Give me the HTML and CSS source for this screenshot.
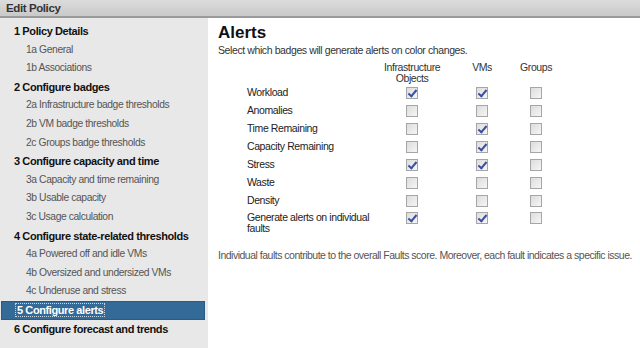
FILE: index.html
```html
<!DOCTYPE html>
<html>
  <head>
    <title>Edit Policy</title>
    <link rel="stylesheet" href="styles.css">
  </head>
  <body>
    <div class="window">
      <div class="titlebar">Edit Policy</div>
      <div class="main">
        <ul class="steps">
          <li class="step">1 Policy Details</li>
          <li class="sub">1a General</li>
          <li class="sub">1b Associations</li>
          <li class="step">2 Configure badges</li>
          <li class="sub">2a Infrastructure badge thresholds</li>
          <li class="sub">2b VM badge thresholds</li>
          <li class="sub">2c Groups badge thresholds</li>
          <li class="step">3 Configure capacity and time</li>
          <li class="sub">3a Capacity and time remaining</li>
          <li class="sub">3b Usable capacity</li>
          <li class="sub">3c Usage calculation</li>
          <li class="step">4 Configure state-related thresholds</li>
          <li class="sub">4a Powered off and idle VMs</li>
          <li class="sub">4b Oversized and undersized VMs</li>
          <li class="sub">4c Underuse and stress</li>
          <li class="step active"><span class="focus">5 Configure alerts</span></li>
          <li class="step">6 Configure forecast and trends</li>
        </ul>
        <div class="content">
          <h1>Alerts</h1>
          <p class="intro">Select which badges will generate alerts on color changes.</p>
          <table class="grid">
            <thead>
              <tr>
                <th class="label"></th>
                <th class="col-infra">Infrastructure<br>Objects</th>
                <th class="col-vm">VMs</th>
                <th class="col-grp">Groups</th>
              </tr>
            </thead>
            <tbody>
              <tr><td class="label">Workload</td><td><span class="cb on"></span></td><td><span class="cb on"></span></td><td><span class="cb"></span></td></tr>
              <tr><td class="label">Anomalies</td><td><span class="cb"></span></td><td><span class="cb"></span></td><td><span class="cb"></span></td></tr>
              <tr><td class="label">Time Remaining</td><td><span class="cb"></span></td><td><span class="cb on"></span></td><td><span class="cb"></span></td></tr>
              <tr><td class="label">Capacity Remaining</td><td><span class="cb"></span></td><td><span class="cb on"></span></td><td><span class="cb"></span></td></tr>
              <tr><td class="label">Stress</td><td><span class="cb on"></span></td><td><span class="cb on"></span></td><td><span class="cb"></span></td></tr>
              <tr><td class="label">Waste</td><td><span class="cb"></span></td><td><span class="cb"></span></td><td><span class="cb"></span></td></tr>
              <tr><td class="label">Density</td><td><span class="cb"></span></td><td><span class="cb"></span></td><td><span class="cb"></span></td></tr>
              <tr class="tall"><td class="label">Generate alerts on individual<br>faults</td><td><span class="cb on"></span></td><td><span class="cb on"></span></td><td><span class="cb"></span></td></tr>
            </tbody>
          </table>
          <p class="note">Individual faults contribute to the overall Faults score. Moreover, each fault indicates a specific issue.</p>
        </div>
      </div>
    </div>
  </body>
</html>
```

FILE: styles.css
```css
* {
  margin: 0;
  padding: 0;
  box-sizing: border-box;
}

body {
  font-family: "Liberation Sans", Arial, sans-serif;
  font-size: 10.5px;
  letter-spacing: -0.4px;
  color: #222;
  background: #fff;
}

.window {
  display: flex;
  flex-direction: column;
  width: 640px;
  height: 348px;
  overflow: hidden;
}

.titlebar {
  height: 18px;
  padding: 2px 6px 0;
  font-weight: bold;
  font-size: 11.5px;
  color: #333;
  background: linear-gradient(#dcdcdc, #c9c9c9);
  border-bottom: 2px solid #9a9a9a;
}

.main {
  display: flex;
  flex: 1;
}

.steps {
  list-style: none;
  flex: 0 0 208px;
  padding: 4px 3px 0 1px;
  background: #e8e8e8;
}

.steps li {
  height: 18.6px;
  line-height: 18px;
  white-space: nowrap;
}

.step {
  padding-left: 13px;
  font-weight: bold;
  font-size: 11px;
  color: #111;
}

.sub {
  padding-left: 25px;
  font-size: 10.3px;
  color: #555;
}

.step.active {
  padding-left: 13px;
  background: #336a97;
  border: 1px solid #2a5a85;
  color: #fff;
  line-height: 16px;
}

.focus {
  border: 1px dotted #c8d6e4;
  padding: 0 1px;
  color: #fff;
}

.content {
  flex: 1;
  min-width: 0;
  overflow: hidden;
  padding: 5px 0 0 10px;
}

h1 {
  font-size: 17px;
  font-weight: bold;
  letter-spacing: 0;
  color: #111;
  line-height: 20px;
}

.intro {
  color: #333;
  margin-top: 1px;
}

.grid {
  border-collapse: collapse;
  margin-top: 6px;
  margin-left: 29px;
}

.grid th {
  font-weight: normal;
  color: #333;
  line-height: 10.5px;
  vertical-align: top;
}

.grid td {
  height: 18px;
  text-align: center;
  vertical-align: middle;
}

.grid .label {
  width: 120px;
  text-align: left;
  white-space: nowrap;
  color: #222;
}

.col-infra {
  width: 86px;
}

.col-vm {
  width: 54px;
}

.col-grp {
  width: 54px;
}

.grid tr.tall td {
  height: 27px;
  padding-top: 3px;
  line-height: 11px;
  vertical-align: top;
}

.cb {
  display: inline-block;
  width: 12px;
  height: 12px;
  border: 1px solid #a6a6a6;
  background: linear-gradient(135deg, #dcdcdc, #f6f6f6);
  vertical-align: middle;
  position: relative;
}

.cb.on::after {
  content: "";
  position: absolute;
  left: 3px;
  top: 0;
  width: 3px;
  height: 7px;
  border: solid #3a4fa0;
  border-width: 0 2px 2px 0;
  transform: rotate(40deg);
}

.note {
  margin-top: 13px;
  white-space: nowrap;
  letter-spacing: -0.5px;
  color: #555;
}
```
